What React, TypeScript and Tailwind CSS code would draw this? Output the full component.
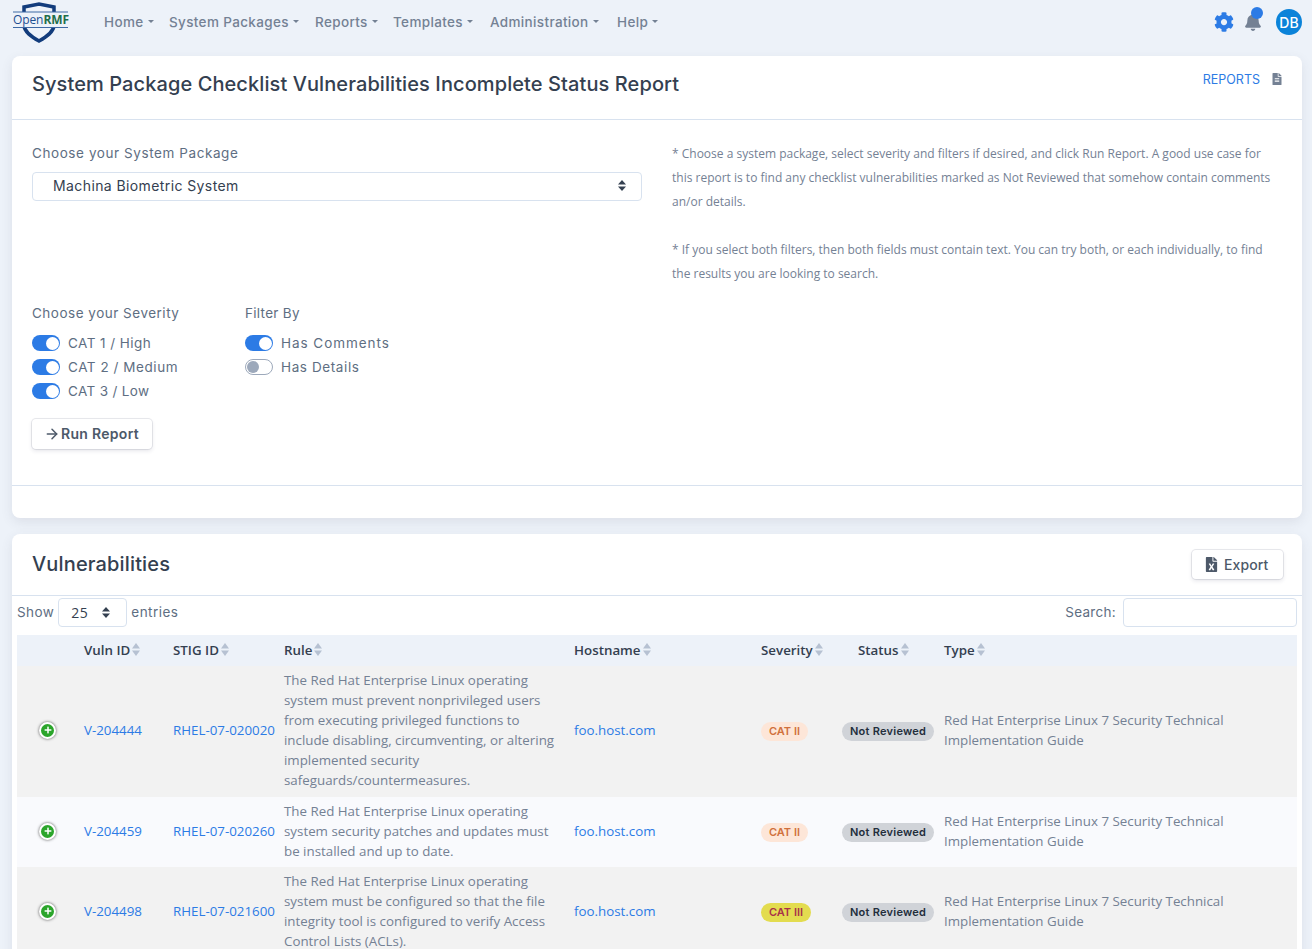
import { ArrowRight } from "lucide-react";
import { FaBell, FaCog, FaFileAlt, FaFileExcel, FaPlus } from "react-icons/fa";

const head = "font-['Inter','Noto_Sans',sans-serif]";

const navItems = [
  { label: "Home", cls: "w-[65px]" },
  { label: "System Packages", cls: "w-[146px]" },
  { label: "Reports", cls: "w-[78px]" },
  { label: "Templates", cls: "w-[97px]" },
  { label: "Administration", cls: "w-[127px]" },
  { label: "Help", cls: "" },
];

const rows = [
  {
    vuln: "V-204444",
    stig: "RHEL-07-020020",
    rule: "The Red Hat Enterprise Linux operating system must prevent nonprivileged users from executing privileged functions to include disabling, circumventing, or altering implemented security safeguards/countermeasures.",
    cat: "CAT II",
  },
  {
    vuln: "V-204459",
    stig: "RHEL-07-020260",
    rule: "The Red Hat Enterprise Linux operating system security patches and updates must be installed and up to date.",
    cat: "CAT II",
  },
  {
    vuln: "V-204498",
    stig: "RHEL-07-021600",
    rule: "The Red Hat Enterprise Linux operating system must be configured so that the file integrity tool is configured to verify Access Control Lists (ACLs).",
    cat: "CAT III",
  },
];

const columns = [
  { label: "Vuln ID", cls: "" },
  { label: "STIG ID", cls: "" },
  { label: "Rule", cls: "" },
  { label: "Hostname", cls: "" },
  { label: "Severity", cls: "" },
  { label: "Status", cls: "pl-[26px]" },
  { label: "Type", cls: "" },
];

function Logo() {
  return (
    <div className="relative w-[60px] h-[42px] shrink-0">
      <svg viewBox="0 0 60 42" className="absolute inset-0 w-full h-full">
        <path
          d="M12 6 L27 3 L42 6 V24 C42 31 34 36 27 40 C20 36 12 31 12 24 Z"
          fill="none"
          stroke="#123c7c"
          strokeWidth="3.5"
        />
        <rect x="0" y="11" width="57" height="15" fill="#edf2f9" />
        <rect x="1" y="10.5" width="55" height="1" fill="#3f6aa5" />
        <rect x="1" y="26" width="55" height="1" fill="#3f6aa5" />
      </svg>
      <span className="absolute left-[1px] top-[10px] text-[12px] leading-[17px] font-['Open_Sans',sans-serif] tracking-[-0.1px] text-[#1d4f91]">
        Open<span className="font-bold text-[#1f6e4a]">RMF</span>
      </span>
    </div>
  );
}

function Toggle({ on = true, label, track = "tracking-[0.55px]" }: { on?: boolean; label: string; track?: string }) {
  return (
    <div className="flex items-center gap-2 h-6">
      {on ? (
        <span className="flex items-center justify-end w-7 h-4 rounded-full bg-[#2c7be5] pr-[1px]">
          <span className="w-[13px] h-[13px] rounded-full bg-white" />
        </span>
      ) : (
        <span className="flex items-center w-7 h-4 rounded-full border border-[#9da9bb] bg-white pl-[1px]">
          <span className="w-3 h-3 rounded-full bg-[#9da9bb]" />
        </span>
      )}
      <span className={`${head} text-[13.5px] ${track} text-[#5e6e82]`}>{label}</span>
    </div>
  );
}

function SortArrows() {
  return (
    <svg viewBox="0 0 8 13" className="w-2 h-[13px] ml-[2px] shrink-0" fill="#b6c1d2">
      <path d="M4 0 L8 5.5 H0 Z" />
      <path d="M4 13 L8 7.5 H0 Z" />
    </svg>
  );
}

function SelectArrows({ color = "#344050" }: { color?: string }) {
  return (
    <svg viewBox="0 0 8 11" className="w-2 h-[11px]" fill={color}>
      <path d="M4 0 L8 4.5 H0 Z" />
      <path d="M4 11 L8 6.5 H0 Z" />
    </svg>
  );
}

function Caret() {
  return <span className="ml-1 mb-[2px] w-0 h-0 border-x-[3px] border-x-transparent border-t-[3px] border-t-[#748194]" />;
}

export default function App() {
  return (
    <div className="h-[949px] overflow-hidden bg-[#edf2f9] font-['Open_Sans',sans-serif] text-[#5e6e82]">
      <nav className="flex items-center h-[44px] pl-3 pr-[10px]">
        <Logo />
        <div className={`${head} flex items-center ml-8 text-[13.5px] font-medium tracking-[0.35px] text-[#748194]`}>
          {navItems.map((n) => (
            <div key={n.label} className={`flex items-center ${n.cls}`}>
              {n.label}
              <Caret />
            </div>
          ))}
        </div>
        <div className="ml-auto flex items-center">
          <FaCog className="text-[#2c7be5] text-[20px] mr-[10px]" />
          <div className="relative mr-[14px]">
            <FaBell className="text-[#748194] text-[18px]" />
            <span className="absolute -top-[6px] left-[7px] w-3 h-3 rounded-full bg-[#2c7be5]" />
          </div>
          <div className={`${head} flex items-center justify-center w-[26px] h-[26px] rounded-full bg-[#0b83d9] text-white text-[14px] font-medium`}>
            DB
          </div>
        </div>
      </nav>

      <div className="ml-3 mr-[10px] mt-3 bg-white rounded-lg shadow-[0_4px_12px_rgba(65,69,88,0.1)]">
        <div className="flex justify-between h-[64px] pl-5 pr-[19px] border-b border-[#d8e2ef]">
          <h1 className={`${head} mt-[14px] text-[20px] leading-[28px] font-medium tracking-[0.09px] text-[#344050]`}>
            System Package Checklist Vulnerabilities Incomplete Status Report
          </h1>
          <div className="flex items-start gap-[11px] pt-4">
            <span className={`${head} text-[12.5px] leading-4 text-[#2c7be5]`}>REPORTS</span>
            <FaFileAlt className="text-[#748194] text-[12px] mt-[1px]" />
          </div>
        </div>

        <div className="flex h-[366px] px-5 border-b border-[#d8e2ef]">
          <div className="w-[610px] shrink-0">
            <div className={`${head} mt-[23px] text-[13.5px] leading-5 tracking-[0.58px]`}>Choose your System Package</div>
            <div className="flex items-center justify-between mt-[9px] h-[29px] pl-[20px] pr-[15px] pb-[2px] border border-[#d8e2ef] rounded">
              <span className={`${head} text-[14px] tracking-[0.4px] text-[#344050]`}>Machina Biometric System</span>
              <SelectArrows />
            </div>
            <div className="flex mt-[102px]">
              <div className="w-[213px]">
                <div className={`${head} text-[13.5px] leading-5 tracking-[0.5px] mb-[8px]`}>Choose your Severity</div>
                <Toggle label="CAT 1 / High" track="tracking-[0.45px]" />
                <Toggle label="CAT 2 / Medium" />
                <Toggle label="CAT 3 / Low" track="tracking-[0.35px]" />
              </div>
              <div>
                <div className={`${head} text-[13.5px] leading-5 tracking-[0.3px] mb-[8px]`}>Filter By</div>
                <Toggle label="Has Comments" track="tracking-[0.95px]" />
                <Toggle on={false} label="Has Details" track="tracking-[0.6px]" />
              </div>
            </div>
            <button className={`${head} flex items-center gap-[1px] mt-[16px] h-[30px] pl-3 pr-[13px] pb-[1px] rounded bg-white text-[14px] font-semibold tracking-[0.3px] text-[#4d5969] shadow-[0_0_0_1px_rgba(43,45,80,0.1),0_2px_4px_rgba(43,45,80,0.12)]`}>
              <ArrowRight className="w-4 h-4" strokeWidth={2.25} />
              Run Report
            </button>
          </div>
          <div className="ml-[30px] pt-[22px] text-[12px] leading-6 text-[#748194]">
            <p>
              * Choose a system package, select severity and filters if desired, and click Run Report. A good use case for
              this report is to find any checklist vulnerabilities marked as Not Reviewed that somehow contain comments
              an/or details.
            </p>
            <p className="mt-6">
              * If you select both filters, then both fields must contain text. You can try both, or each individually, to find
              the results you are looking to search.
            </p>
          </div>
        </div>
        <div className="h-[32px]" />
      </div>

      <div className="ml-3 mr-[10px] mt-4 bg-white rounded-t-lg shadow-[0_4px_12px_rgba(65,69,88,0.1)]">
        <div className="flex items-center justify-between h-[62px] pl-5 pr-[19px] pb-[1px] border-b border-[#d8e2ef]">
          <h2 className={`${head} text-[20px] font-medium tracking-[0.15px] text-[#344050]`}>Vulnerabilities</h2>
          <button className={`${head} flex items-center gap-[5px] w-[91px] h-[29px] pl-[12px] rounded bg-white text-[14px] font-medium tracking-[0.1px] text-[#4d5969] shadow-[0_0_0_1px_rgba(43,45,80,0.1),0_2px_4px_rgba(43,45,80,0.12)]`}>
            <FaFileExcel className="text-[15px]" />
            Export
          </button>
        </div>

        <div className="px-[5px]">
          <div className="flex items-start justify-between h-[39px] pt-[2px]">
            <div className={`${head} flex items-center text-[13.5px] tracking-[0.45px]`}>
              Show
              <div className="flex items-center justify-between w-[69px] h-[29px] mx-[4px] pl-[12px] pr-[16px] border border-[#d8e2ef] rounded text-[#344050] font-['Open_Sans',sans-serif] text-[14px]">
                25
                <SelectArrows />
              </div>
              entries
            </div>
            <div className={`${head} flex items-center gap-[7px] text-[13.5px] tracking-[0.3px]`}>
              Search:
              <div className="w-[174px] h-[29px] border border-[#d8e2ef] rounded" />
            </div>
          </div>

          <table className="w-[1280px] table-fixed border-collapse text-[13.33px] leading-5">
            <colgroup>
              <col className="w-[57px]" />
              <col className="w-[89px]" />
              <col className="w-[111px]" />
              <col className="w-[290px]" />
              <col className="w-[187px]" />
              <col className="w-[81px]" />
              <col className="w-[102px]" />
              <col />
            </colgroup>
            <thead>
              <tr className="h-[31px] bg-[#edf2f9]">
                <th />
                {columns.map((c) => (
                  <th key={c.label} className={`px-[10px] pb-[2px] text-left font-semibold text-[#344050] ${c.cls}`}>
                    <span className="flex items-center">
                      {c.label}
                      <SortArrows />
                    </span>
                  </th>
                ))}
              </tr>
            </thead>
            <tbody>
              {rows.map((r, i) => {
                const pad = i === 0 ? "pt-[4px] pb-[7px]" : "pt-[4px] pb-[6px]";
                return (
                  <tr key={r.vuln} className={i % 2 === 0 ? "bg-[#f2f2f2]" : "bg-[#f9fafd]"}>
                    <td className={pad}>
                      <span className="flex items-center justify-center w-[13px] h-[13px] ml-[22px] rounded-full bg-[#2ba52b] border-2 border-white box-content shadow-[0_0_3px_#555]">
                        <FaPlus className="text-white text-[8px]" />
                      </span>
                    </td>
                    <td className={`px-[10px] ${pad} text-[#2c7be5]`}>{r.vuln}</td>
                    <td className={`px-[10px] ${pad} whitespace-nowrap text-[#2c7be5]`}>{r.stig}</td>
                    <td className={`pl-[10px] pr-[8px] ${pad} text-[#748194]`}>{r.rule}</td>
                    <td className={`px-[10px] ${pad} text-[#2c7be5]`}>foo.host.com</td>
                    <td className={`px-[10px] ${pad}`}>
                      <span
                        className={`${head} inline-block mt-[2px] px-2 rounded-full text-[11px] leading-[19px] font-semibold align-middle ${
                          r.cat === "CAT III" ? "bg-[#e3dc4f] text-[#a8324a]" : "bg-[#fde6d8] text-[#d0703c]"
                        }`}
                      >
                        {r.cat}
                      </span>
                    </td>
                    <td className={`px-[10px] ${pad}`}>
                      <span className={`${head} inline-block mt-[2px] px-2 rounded-full bg-[#d0d3d8] text-[11px] leading-[19px] font-semibold tracking-[0.25px] text-[#232e3c] whitespace-nowrap align-middle`}>
                        Not Reviewed
                      </span>
                    </td>
                    <td className={`px-[10px] ${pad} text-[#748194]`}>Red Hat Enterprise Linux 7 Security Technical Implementation Guide</td>
                  </tr>
                );
              })}
            </tbody>
          </table>
        </div>
      </div>
    </div>
  );
}
